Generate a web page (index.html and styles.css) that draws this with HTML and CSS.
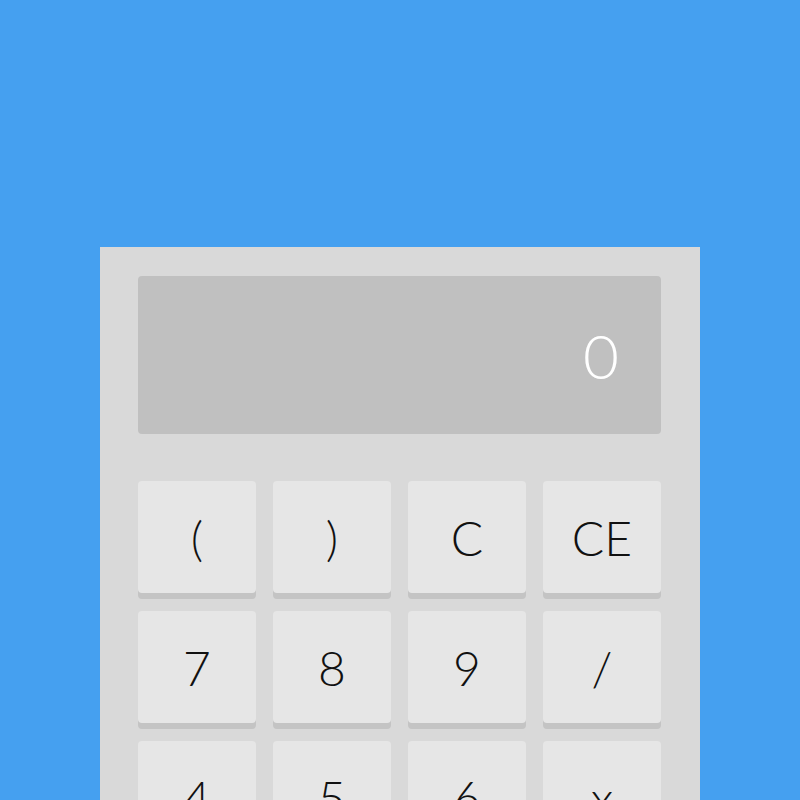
FILE: index.html
```html
<!DOCTYPE html>
<html>
<head>
<meta charset="utf-8">
<link rel="stylesheet" href="styles.css">
</head>
<body>
<div class="calc">
  <div class="display">0</div>
  <div class="keys">
    <button class="key">(</button>
    <button class="key">)</button>
    <button class="key">C</button>
    <button class="key">CE</button>
    <button class="key">7</button>
    <button class="key">8</button>
    <button class="key">9</button>
    <button class="key">/</button>
    <button class="key">4</button>
    <button class="key">5</button>
    <button class="key">6</button>
    <button class="key">x</button>
  </div>
</div>
</body>
</html>
```
FILE: styles.css
```css
html, body {
  margin: 0;
  padding: 0;
}
body {
  background: #45a0f0;
  height: 800px;
  overflow: hidden;
  font-family: Lato, "Open Sans", sans-serif;
}
.calc {
  width: 600px;
  margin: 247px 0 0 100px;
  background: #d9d9d9;
  padding: 29px 39px 40px 38px;
  box-sizing: border-box;
}
.display {
  height: 158px;
  background: #c0c0c0;
  border-radius: 4px;
  display: flex;
  align-items: center;
  justify-content: flex-end;
  padding-right: 42px;
  color: #fff;
  font-size: 62px;
  font-weight: 300;
}
.keys {
  margin-top: 47px;
  display: grid;
  grid-template-columns: repeat(4, 118px);
  column-gap: 17px;
  row-gap: 18px;
}
.key {
  height: 112px;
  border: none;
  border-radius: 4px;
  background: #e6e6e6;
  box-shadow: 0 6px 0 #c4c4c4;
  font-family: inherit;
  font-size: 48px;
  font-weight: 300;
  color: #111;
  padding: 0;
}
```
